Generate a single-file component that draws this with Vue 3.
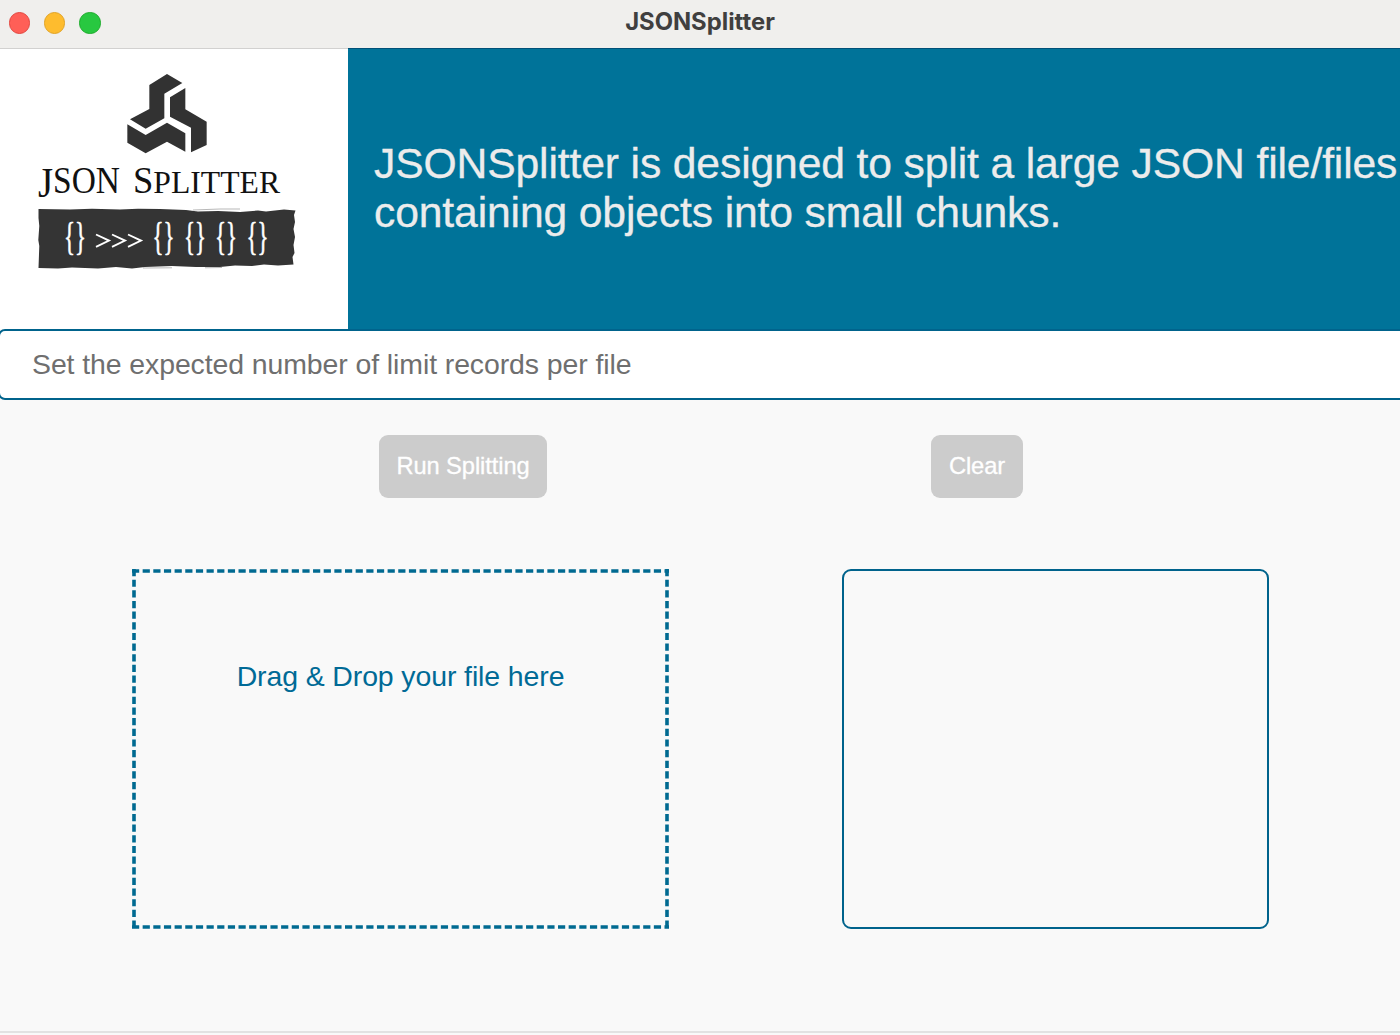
<script setup>
const lights = ['red', 'amber', 'green']
const braces = [64, 152.5, 184, 215, 246.5]
</script>

<template>
  <div class="window">
    <header class="titlebar">
      <div class="lights">
        <span v-for="c in lights" :key="c" class="light" :class="c"></span>
      </div>
      <h1 class="title">JSONSplitter</h1>
    </header>

    <section class="banner">
      <svg class="logo" viewBox="0 49 348 280" width="348" height="281">
        <g fill="#323232" transform="translate(110 65) scale(.33333)">
          <path d="M118 60 171 27 217 54 163 86V160L107 191 60 163 118 132Z" />
          <path d="M180 97 226 69V133L290 170V240L243 262V188L180 155Z" />
          <path d="M52 178 107 210 171 173 226 205V260L171 230 107 265 52 233Z" />
        </g>
        <g class="wordmark">
          <text x="38" y="193" font-size="37" textLength="82" lengthAdjust="spacingAndGlyphs"><tspan font-size="43" dy="4">J</tspan><tspan dy="-4">SON</tspan></text>
          <text x="133" y="193" font-size="37" textLength="147" lengthAdjust="spacingAndGlyphs">S<tspan font-size="32">PLITTER</tspan></text>
        </g>
        <path
          fill="#343434"
          d="M38.5 209 70 209.5 92 208.8 120 209.5 138 208.8 160 209 186 210 198 211.5 218 211 240 212 258 210.5 266 211.5 284 209.5 295.5 210.5 294 215 295 222 293.5 229 295 237 293.5 245 294.5 253 292.5 257 293.5 264.5 278 265.5 264 264.5 252 266 235 265.5 220 267 196 267 172 266 145 267 132 268.5 116 267 98 268.5 72 267.5 58 268.5 38.5 268 39.3 246 38.3 240 39.3 226 38.5 218Z"
        />
        <path class="dust" d="M193 210 220 209 240 209 M143 268 172 267.8 M205 267.8 222 267.5" />
        <g class="glyphs">
          <text v-for="x in braces" :key="x" :x="x" y="250" textLength="22" lengthAdjust="spacingAndGlyphs">{}</text>
        </g>
        <path class="arrows" d="M96 234.5 109 240.6 96 246.8M112 234.5 125 240.6 112 246.8M128 234.5 141 240.6 128 246.8" />
      </svg>
      <p class="tagline">JSONSplitter is designed to split a large JSON file/files<br />containing objects into small chunks.</p>
    </section>

    <input class="limit" type="text" placeholder="Set the expected number of limit records per file" />

    <div class="actions">
      <button class="run" disabled>Run Splitting</button>
      <button class="clear" disabled>Clear</button>
    </div>

    <main class="panels">
      <div class="drop">
        <svg class="dashes" width="537" height="360">
          <path d="M0 2H537M0 358H537" />
          <path d="M2 0V360M535 0V360" />
        </svg>
        <span>Drag &amp; Drop your file here</span>
      </div>
      <div class="results"></div>
    </main>
    <footer class="edge"></footer>
  </div>
</template>

<style>
body {
  margin: 0;
  background: #f9f9f9;
}
</style>

<style scoped>
.window {
  box-sizing: border-box;
  display: flex;
  flex-direction: column;
  width: 1400px;
  height: 1035px;
  overflow: hidden;
  background: #f9f9f9;
  font-family: "Liberation Sans", Arial, sans-serif;
}
.titlebar {
  box-sizing: border-box;
  display: grid;
  grid-template-columns: 1fr auto 1fr;
  align-items: center;
  flex: none;
  height: 48px;
  padding: 0 9px;
  background: #f0efed;
}
.lights {
  display: flex;
  gap: 14px;
  margin-top: -2px;
}
.light {
  box-sizing: border-box;
  width: 21.2px;
  height: 21.2px;
  border-radius: 50%;
  border: 1px solid;
}
.red { background: #ff5f57; border-color: #e2463f; }
.amber { background: #febc2e; border-color: #e1a325; }
.green { background: #28c840; border-color: #1dac2b; }
.title {
  margin: -4px 0 0;
  font: 700 23.8px/28px Inter, sans-serif;
  color: #403f3f;
}
.banner {
  display: flex;
  flex: none;
  height: 281px;
  background: #007399;
  box-shadow: inset 0 1px #005078;
}
.logo {
  flex: none;
  background: #fff;
  border-top: 1px solid #d2d1d0;
  box-sizing: border-box;
}
.wordmark {
  font-family: "Liberation Serif", serif;
  fill: #111;
}
.glyphs {
  font-family: "Liberation Serif", serif;
  font-size: 39px;
  fill: #fff;
  stroke: #fff;
  stroke-width: 0.7;
}
.dust { stroke: #999; stroke-width: 0.7; fill: none; }
.arrows { stroke: #fff; stroke-width: 1.9; fill: none; }
.tagline {
  margin: 91px 0 0 26px;
  white-space: nowrap;
  font-size: 42.67px;
  line-height: 49px;
  letter-spacing: -0.14px;
  color: #ececec;
  -webkit-text-stroke: 0.3px #ececec;
}
.limit {
  box-sizing: border-box;
  flex: none;
  width: 1412px;
  height: 71px;
  margin: 0 0 0 -2px;
  padding: 0 32px;
  border: 2px solid #00638c;
  border-radius: 7px;
  background: #fff;
  font: 28.44px/33px "Liberation Sans", Arial, sans-serif;
  letter-spacing: -0.09px;
  outline: none;
}
.limit::placeholder { color: #6f6f6f; opacity: 1; }
.actions {
  display: flex;
  flex: none;
  gap: 384px;
  padding: 35px 0 0 379px;
}
.actions button {
  box-sizing: border-box;
  height: 63px;
  margin: 0;
  padding: 0;
  border: 0;
  border-radius: 9px;
  background: #ccc;
  color: #fff;
  font: 23.7px/27px "Liberation Sans", Arial, sans-serif;
  letter-spacing: -0.09px;
  -webkit-text-stroke: 0.3px #fff;
}
.run { width: 168px; }
.clear { width: 92px; }
.panels {
  display: flex;
  flex: 1;
  gap: 173px;
  padding: 71px 0 0 132px;
}
.drop {
  position: relative;
  box-sizing: border-box;
  width: 537px;
  height: 360px;
  padding-top: 91px;
  text-align: center;
  font-size: 28.44px;
  line-height: 33px;
  letter-spacing: -0.1px;
  color: #006a96;
}
.dashes {
  position: absolute;
  inset: 0;
}
.dashes path {
  stroke: #006a91;
  stroke-width: 3.6;
  stroke-dasharray: 7.2 3.45;
  fill: none;
}
.results {
  box-sizing: border-box;
  width: 427px;
  height: 360px;
  border: 2px solid #00638c;
  border-radius: 9px;
}
.edge {
  flex: none;
  height: 2px;
  margin-bottom: 2px;
  background: #e2e2e2;
}
</style>
